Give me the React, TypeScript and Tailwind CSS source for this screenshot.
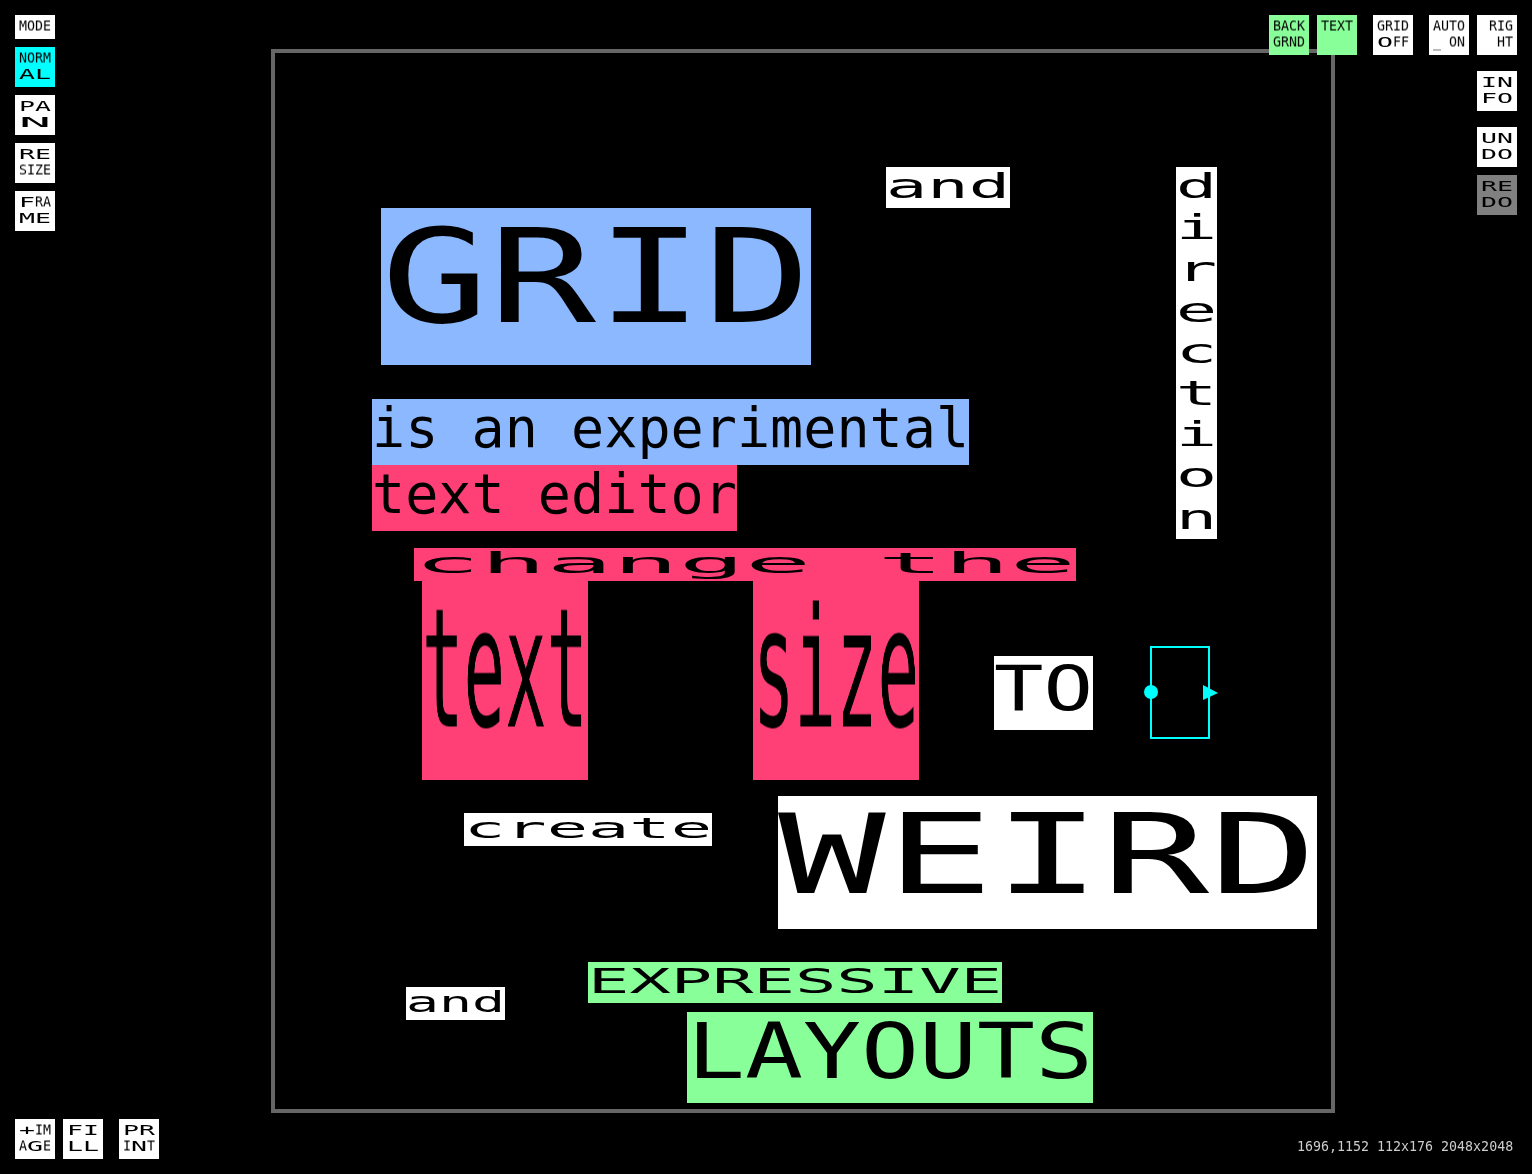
import type { ReactNode } from 'react';

// DejaVu Sans Mono advance is 0.602em; boxes use a line height of 1.2 x font size
const ADVANCE = 0.602;

function Stretch({ text, cell, h }: { text: string; cell: number; h: number }) {
  const size = h / 1.2;
  const sx = cell / (size * ADVANCE);
  // small labels sit a little lower than the large blocks
  const shift = h < 20 ? -0.5 : h < 50 ? -h * 0.035 : -h * 0.058;
  return (
    <span className="block relative shrink-0 overflow-visible" style={{ width: cell * text.length, height: h }}>
      <span
        className="absolute left-0 top-0 origin-top-left whitespace-pre will-change-transform"
        style={{
          fontSize: size,
          lineHeight: `${h}px`,
          transform: `translateY(${shift}px) scaleX(${sx})`,
        }}
      >
        {text}
      </span>
    </span>
  );
}

// one button line: runs of [text, width of each character]
type Run = [string, number];

function Line({ runs, right }: { runs: Run[]; right?: boolean }) {
  return (
    <div className={right ? 'flex h-4 justify-end' : 'flex h-4'}>
      {runs.map(([t, w], i) => (
        <Stretch key={i} text={t} cell={w} h={16} />
      ))}
    </div>
  );
}

function Btn({ className, children }: { className?: string; children: ReactNode }) {
  return <div className={`w-10 p-1 shrink-0 text-black ${className ?? 'h-10 bg-white'}`}>{children}</div>;
}

function Block({ className, text, cell, h }: { className: string; text: string; cell: number; h: number }) {
  return (
    <div className={`absolute text-black ${className}`}>
      <Stretch text={text} cell={cell} h={h} />
    </div>
  );
}

export default function App() {
  return (
    <div className="relative w-[1532px] h-[1174px] overflow-hidden bg-black [font-family:'DejaVu_Sans_Mono',monospace]">
      {/* canvas frame */}
      <div className="absolute left-[271px] top-[49px] w-[1064px] h-[1064px] border-4 border-[#666666]" />

      {/* text blocks on the canvas */}
      <Block className="left-[886px] top-[167px] bg-white" text="and" cell={41.33} h={41} />
      <div className="absolute left-[1176px] top-[167px] flex flex-col bg-white text-black">
        {'direction'.split('').map((c, i) => (
          <Stretch key={i} text={c} cell={41} h={41.33} />
        ))}
      </div>
      <Block className="left-[381px] top-[208px] bg-[#8cb8ff]" text="GRID" cell={107.5} h={157} />
      <Block className="left-[372px] top-[399px] bg-[#8cb8ff]" text="is an experimental" cell={33.17} h={66} />
      <Block className="left-[372px] top-[465px] bg-[#ff4077]" text="text editor" cell={33.17} h={66} />
      <Block className="left-[414px] top-[548px] bg-[#ff4077]" text="change the" cell={66.2} h={33} />
      <Block className="left-[422px] top-[581px] bg-[#ff4077]" text="text" cell={41.5} h={199} />
      <Block className="left-[753px] top-[581px] bg-[#ff4077]" text="size" cell={41.5} h={199} />
      <Block className="left-[994px] top-[656px] bg-white" text="TO" cell={49.5} h={74} />
      <Block className="left-[464px] top-[813px] bg-white" text="create" cell={41.33} h={33} />
      <Block className="left-[778px] top-[796px] bg-white" text="WEIRD" cell={107.8} h={133} />
      <Block className="left-[406px] top-[987px] bg-white" text="and" cell={33} h={33} />
      <Block className="left-[588px] top-[962px] bg-[#88ff99]" text="EXPRESSIVE" cell={41.4} h={41} />
      <Block className="left-[687px] top-[1012px] bg-[#88ff99]" text="LAYOUTS" cell={58} h={91} />

      {/* selection box with its handles */}
      <div className="absolute left-[1150px] top-[646px] w-[60px] h-[93px] border-2 border-[#00ffff]">
        <div className="absolute left-[-8px] top-[37px] w-[14px] h-[14px] rounded-full bg-[#00ffff]" />
        <svg className="absolute left-[51px] top-[37px]" width="16" height="16" viewBox="0 0 16 16">
          <path d="M0 0 L15 8 L0 15 Z" fill="#00ffff" />
        </svg>
      </div>

      {/* left tools */}
      <div className="absolute left-[15px] top-[15px] flex flex-col gap-2">
        <Btn className="h-6 bg-white">
          <Line runs={[['MODE', 8]]} />
        </Btn>
        <Btn className="h-10 bg-[#00ffff]">
          <Line runs={[['NORM', 8]]} />
          <Line runs={[['AL', 16]]} />
        </Btn>
        <Btn>
          <Line runs={[['PA', 16]]} />
          <Line runs={[['N', 32]]} />
        </Btn>
        <Btn>
          <Line runs={[['RE', 16]]} />
          <Line runs={[['SIZE', 8]]} />
        </Btn>
        <Btn>
          <Line runs={[['F', 16], ['RA', 8]]} />
          <Line runs={[['ME', 16]]} />
        </Btn>
      </div>

      {/* top right tools */}
      <div className="absolute right-[15px] top-[15px] flex flex-col items-end">
        <div className="flex">
          <Btn className="h-10 bg-[#88ff99]">
            <Line runs={[['BACK', 8]]} />
            <Line runs={[['GRND', 8]]} />
          </Btn>
          <Btn className="ml-2 h-10 bg-[#88ff99]">
            <Line runs={[['TEXT', 8]]} />
          </Btn>
          <Btn className="ml-4 h-10 bg-white">
            <Line runs={[['GRID', 8]]} />
            <Line runs={[['O', 16], ['FF', 8]]} />
          </Btn>
          <Btn className="ml-4 h-10 bg-white">
            <Line runs={[['AUTO', 8]]} />
            <Line runs={[['_ ON', 8]]} />
          </Btn>
          <Btn className="ml-2 h-10 bg-white">
            <Line right runs={[['RIG', 8]]} />
            <Line right runs={[['HT', 8]]} />
          </Btn>
        </div>
        <div className="mt-4 flex flex-col gap-4">
          <Btn>
            <Line runs={[['IN', 16]]} />
            <Line runs={[['FO', 16]]} />
          </Btn>
          <div className="flex flex-col gap-2">
            <Btn>
              <Line runs={[['UN', 16]]} />
              <Line runs={[['DO', 16]]} />
            </Btn>
            <Btn className="h-10 bg-[#808080]">
              <Line runs={[['RE', 16]]} />
              <Line runs={[['DO', 16]]} />
            </Btn>
          </div>
        </div>
      </div>

      {/* bottom left tools */}
      <div className="absolute left-[15px] bottom-[15px] flex">
        <Btn>
          <Line runs={[['+', 16], ['IM', 8]]} />
          <Line runs={[['A', 8], ['G', 16], ['E', 8]]} />
        </Btn>
        <Btn className="ml-2 h-10 bg-white">
          <Line runs={[['FI', 16]]} />
          <Line runs={[['LL', 16]]} />
        </Btn>
        <Btn className="ml-4 h-10 bg-white">
          <Line runs={[['PR', 16]]} />
          <Line runs={[['I', 8], ['N', 16], ['T', 8]]} />
        </Btn>
      </div>

      {/* status */}
      <div className="absolute right-[19px] bottom-[19px] text-[13.3px] leading-4 whitespace-pre text-[#cccccc] will-change-transform">
        1696,1152 112x176 2048x2048
      </div>
    </div>
  );
}
